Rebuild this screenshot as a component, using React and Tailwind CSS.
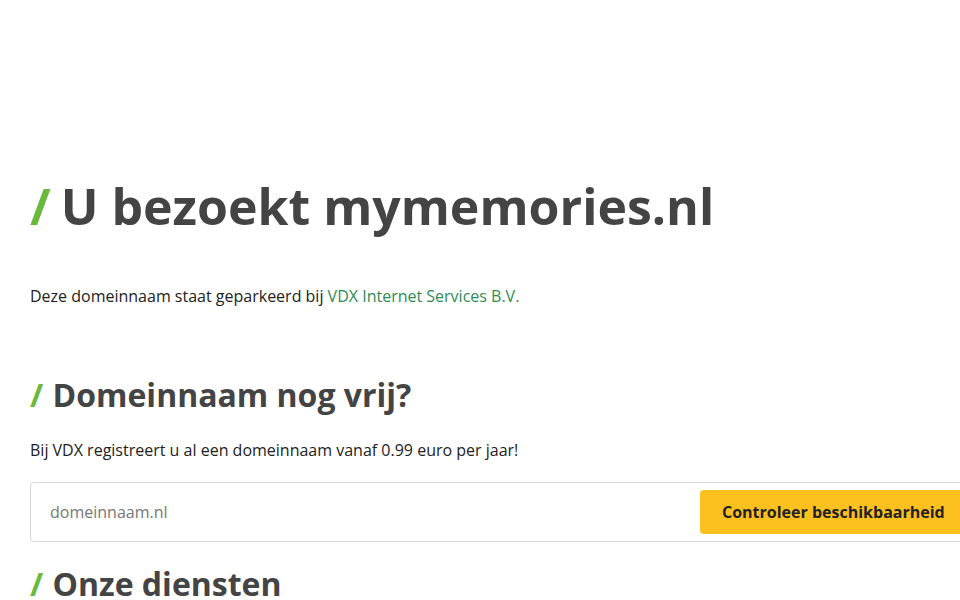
export default function App() {
  return (
    <div className="w-[960px] h-[600px] overflow-hidden bg-white" style={{ fontFamily: '"Open Sans", sans-serif' }}>
      <div className="pl-[30px] pt-[170px]">
        <h1 className="text-[50px] font-bold leading-[72px] text-[#444444] whitespace-nowrap">
          <span className="text-[#6ab93c]">/</span> <span className="ml-[-3px]">U bezoekt mymemories.nl</span>
        </h1>
        <p className="mt-[42px] text-[16px] leading-[24px] text-[#222222]">
          Deze domeinnaam staat geparkeerd bij <a className="text-[#2e8b57]">VDX Internet Services B.V.</a>
        </p>
        <h2 className="mt-[63px] text-[32px] font-bold leading-[48px] text-[#444444]">
          <span className="text-[#6ab93c]">/</span> <span className="ml-[1px]">Domeinnaam nog vrij?</span>
        </h2>
        <p className="mt-[19px] text-[16px] leading-[24px] text-[#222222]">
          Bij VDX registreert u al een domeinnaam vanaf 0.99 euro per jaar!
        </p>
        <div className="mt-[20px] w-[1000px] h-[60px] border border-[#d6d6d6] rounded-[4px] flex items-center pl-[19px]">
          <span className="w-[650px] text-[16px] text-[#777777]">domeinnaam.nl</span>
          <div className="h-[44px] w-[290px] bg-[#fcc11f] rounded-[4px] flex items-center pl-[22px] text-[16px] font-bold text-[#222222]">
            Controleer beschikbaarheid
          </div>
        </div>
        <h2 className="mt-[18px] text-[32px] font-bold leading-[48px] text-[#444444] whitespace-nowrap">
          <span className="text-[#6ab93c]">/</span> <span className="ml-[1px]">Onze diensten</span>
        </h2>
      </div>
    </div>
  );
}
